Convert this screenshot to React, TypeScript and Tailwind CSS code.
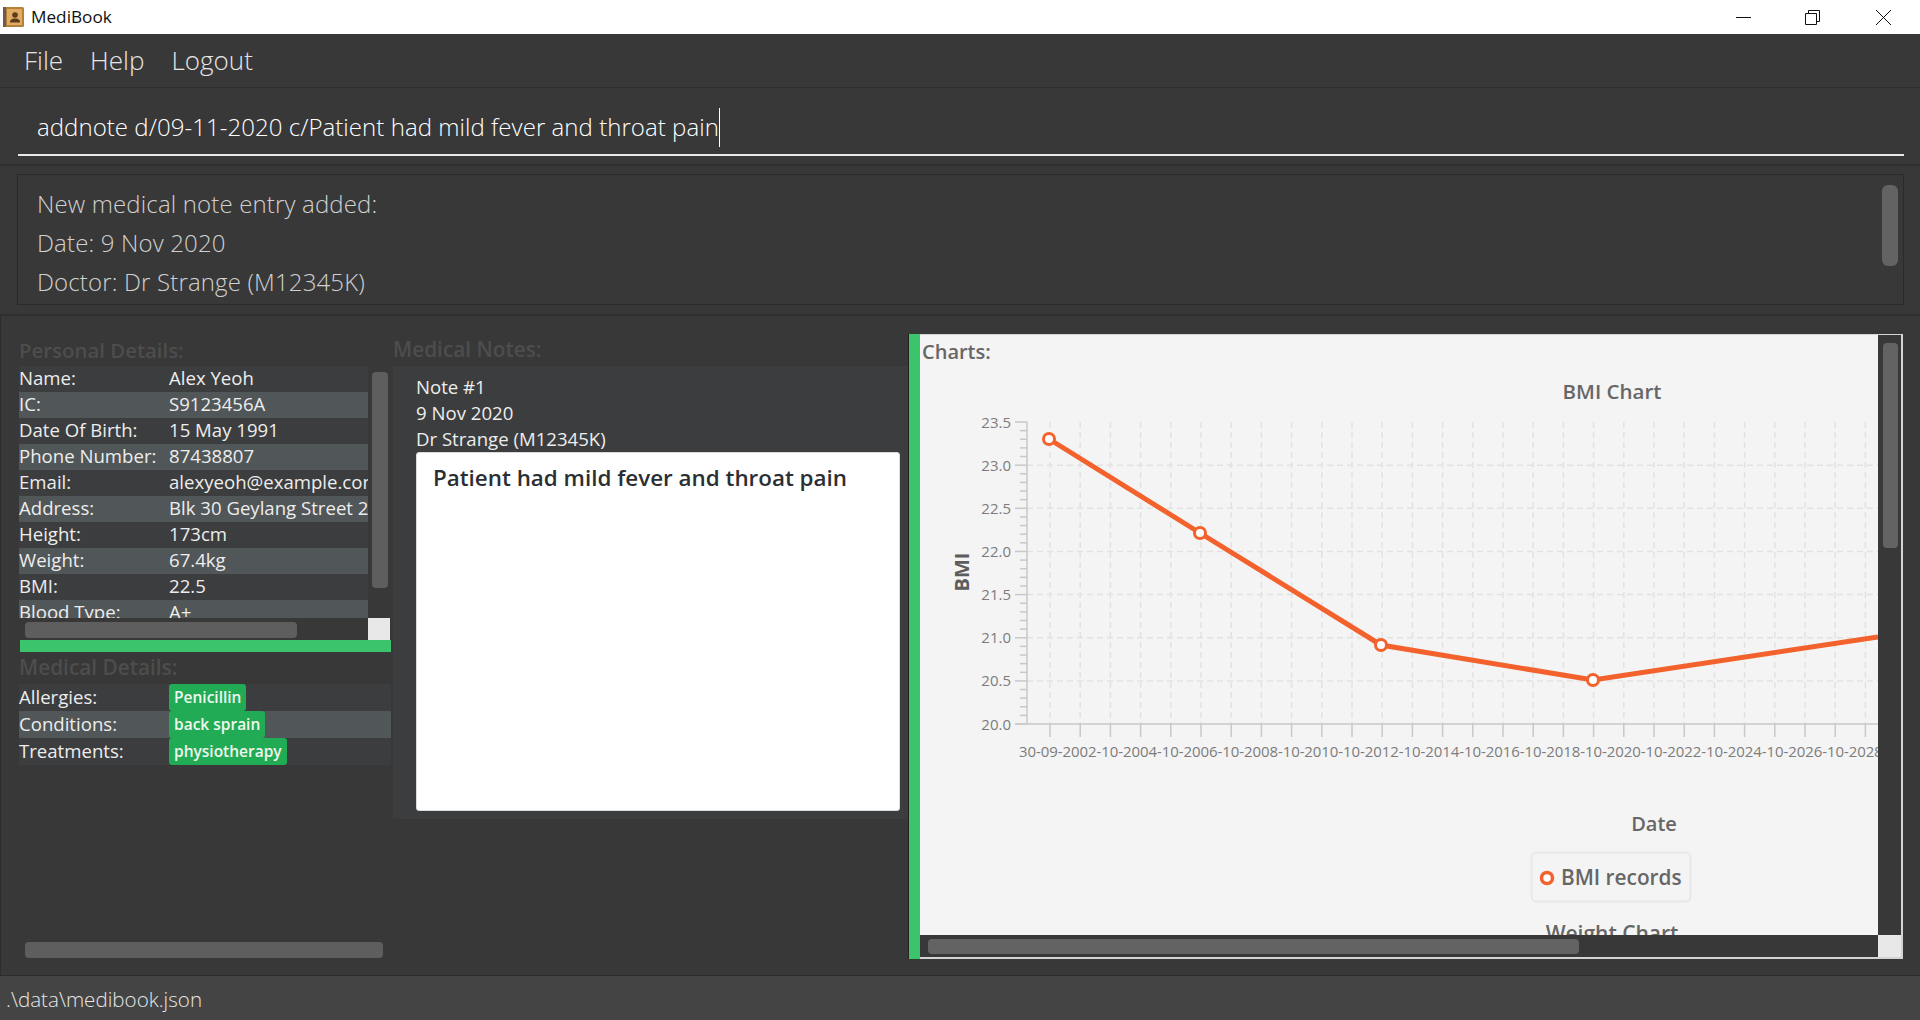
import React from 'react';

const personal = [
  ['Name:', 'Alex Yeoh'],
  ['IC:', 'S9123456A'],
  ['Date Of Birth:', '15 May 1991'],
  ['Phone Number:', '87438807'],
  ['Email:', 'alexyeoh@example.com'],
  ['Address:', 'Blk 30 Geylang Street 29'],
  ['Height:', '173cm'],
  ['Weight:', '67.4kg'],
  ['BMI:', '22.5'],
  ['Blood Type:', 'A+'],
];

const medical = [
  ['Allergies:', 'Penicillin'],
  ['Conditions:', 'back sprain'],
  ['Treatments:', 'physiotherapy'],
];

const yLabels = ['23.5', '23.0', '22.5', '22.0', '21.5', '21.0', '20.5', '20.0'];
const xTicks = Array.from({ length: 28 }, (_, i) => 130 + i * 30.2);
const points = [
  [129, 105],
  [280, 199],
  [461, 311],
  [673, 346],
];

function BmiChart() {
  const top = 88;
  const step = 43.15;
  const minor: number[] = [];
  for (let i = 0; i <= 35; i++) minor.push(top + (i * step) / 5);
  return (
    <svg width="958" height="601" className="block absolute top-[-1px] left-0">
      {yLabels.slice(1, 7).map((_, i) => (
        <line key={i} x1="107" x2="958" y1={top + (i + 1) * step} y2={top + (i + 1) * step} stroke="#e2e2e2" strokeWidth="1.5" strokeDasharray="6 4" />
      ))}
      {xTicks.map((x) => (
        <line key={x} x1={x} x2={x} y1={top} y2={top + 302} stroke="#e2e2e2" strokeWidth="1.5" strokeDasharray="6 4" />
      ))}
      {minor.map((y, i) => (
        <line key={i} x1={i % 5 === 0 ? 95 : 100} x2="107" y1={y} y2={y} stroke="#c8c8c8" strokeWidth="1.5" />
      ))}
      <line x1="107" x2="107" y1={top} y2={top + 302} stroke="#c8c8c8" strokeWidth="1.5" />
      <line x1="95" x2="958" y1={top + 302} y2={top + 302} stroke="#c8c8c8" strokeWidth="1.5" />
      {xTicks.map((x) => (
        <line key={x} x1={x} x2={x} y1={top + 302} y2={top + 315} stroke="#c8c8c8" strokeWidth="1.5" />
      ))}
      {yLabels.map((l, i) => (
        <text key={l} x="91" y={top + i * step + 5.5} textAnchor="end" fontSize="15" fill="#7c7c7c">{l}</text>
      ))}
      <text x="99" y="423" fontSize="15" letterSpacing="-0.08" fill="#7c7c7c">30-09-2002-10-2004-10-2006-10-2008-10-2010-10-2012-10-2014-10-2016-10-2018-10-2020-10-2022-10-2024-10-2026-10-2028</text>
      <text x="692" y="65" textAnchor="middle" fontSize="20.500" fontWeight="600" fill="#666">BMI Chart</text>
      <text transform="translate(49 238) rotate(-90)" textAnchor="middle" fontSize="20" fontWeight="700" fill="#5c5c5c">BMI</text>
      <text x="734" y="497" textAnchor="middle" fontSize="20" fontWeight="600" fill="#666">Date</text>
      <rect x="611.5" y="518.5" width="159" height="49" rx="5" fill="#f4f4f4" stroke="#e8e8e8" strokeWidth="2" />
      <circle cx="627" cy="544" r="5.500" fill="#fff" stroke="#f3622d" strokeWidth="3.500" />
      <text x="641" y="551" fontSize="20.800" fontWeight="600" fill="#666">BMI records</text>
      <text x="692" y="607" textAnchor="middle" fontSize="21" fontWeight="600" fill="#666">Weight Chart</text>
      <polyline points={[...points, [958, 303]].map((p) => p.join(',')).join(' ')} fill="none" stroke="#f3622d" strokeWidth="5" />
      {points.map((p) => (
        <circle key={p[0]} cx={p[0]} cy={p[1]} r="5.500" fill="#fff" stroke="#f3622d" strokeWidth="3" />
      ))}
    </svg>
  );
}

export default function App() {
  return (
    <div className="w-[1920px] h-[1020px] flex flex-col overflow-hidden bg-[#383838] font-['Open_Sans',sans-serif]">
      {/* window title bar */}
      <div className="h-[34px] bg-white flex items-center shrink-0">
        <svg width="21" height="20" viewBox="0 0 21 20" className="ml-[3px]">
          <rect x="0" y="0" width="21" height="20" rx="1.5" fill="#b5813a" />
          <rect x="0" y="0" width="3" height="20" fill="#6b5a55" />
          <rect x="4" y="2" width="15" height="16" fill="#e0ac62" />
          <circle cx="12" cy="8" r="2.800" fill="#5a3c1c" />
          <path d="M7 15.500c0-3 2-4 5-4s5 1 5 4z" fill="#5a3c1c" />
        </svg>
        <span className="ml-[7px] text-[17.2px] text-[#111]">MediBook</span>
        <div className="ml-auto flex items-center">
          <svg width="15" height="15" viewBox="0 0 15 15" className="mr-[54px]"><path d="M0 7.500H15" stroke="#111" strokeWidth="1" /></svg>
          <svg width="15" height="15" viewBox="0 0 15 15" className="mr-[56px]" fill="none" stroke="#111"><path d="M.5 3.500h11v11H.5z" /><path d="M3.500 3.500V.5h11v11h-3" /></svg>
          <svg width="15" height="15" viewBox="0 0 15 15" className="mr-[29px]" stroke="#111"><path d="M0 0L15 15M15 0L0 15" /></svg>
        </div>
      </div>

      {/* menu bar */}
      <div className="h-[54px] shrink-0 flex items-center pl-[24px] gap-[27px] text-[26px] font-light text-[#e6e6e6] border-b border-[#2e2e2e]">
        <span>File</span>
        <span>Help</span>
        <span>Logout</span>
      </div>

      {/* command box */}
      <div className="h-[78px] shrink-0 pl-[18px] pr-[16px] border-b-2 border-[#2f2f2f]">
        <div className="h-[68px] pt-[12px] border-b-2 border-[#e8e8e8] pl-[19px] flex items-center text-[24px] font-light text-white">
          <span className="tracking-[0.05px]">addnote d/09-11-2020 c/Patient had mild fever and throat pain</span>
          <span className="w-px h-[39px] bg-white" />
        </div>
      </div>

      {/* result box */}
      <div className="h-[150px] shrink-0 pt-[8px] pl-[17px] pr-[16px] pb-[8px] border-b-2 border-[#2f2f2f]">
        <div className="h-[131px] border border-[#2a2a2a] pl-[19px] pr-[5px] flex justify-between">
          <div className="pt-[9px] text-[24px] leading-[39px] font-light text-[#d0d0d0] tracking-[0.15px]">
            <div>New medical note entry added:</div>
            <div>Date: 9 Nov 2020</div>
            <div>Doctor: Dr Strange (M12345K)</div>
          </div>
          <div className="mt-[10px] w-[16px] h-[81px] rounded-[6px] bg-[#636363]" />
        </div>
      </div>

      {/* main panels */}
      <div className="flex-1 min-h-0 flex pt-[18px] border-b border-l border-[#2c2c2c]">
        <div className="w-[392px] shrink-0 pl-[18px] pr-[2px] flex flex-col">
          <h2 className="h-[32px] flex items-center text-[20.4px] font-semibold text-[#4d4d4d]">Personal Details:</h2>
          <div className="flex h-[252px]">
            <div className="w-[349px] h-[252px] overflow-hidden text-[18.6px] text-[#ededed]">
              {personal.map(([k, v], i) => (
                <div key={k} className={`h-[26px] leading-[24px] flex whitespace-nowrap ${i % 2 ? 'bg-[#515658]' : 'bg-[#3c3d3f]'}`}>
                  <span className="w-[150px] shrink-0">{k}</span>
                  <span>{v}</span>
                </div>
              ))}
            </div>
            <div className="w-[22px] pl-[4px] pt-[6px]">
              <div className="w-[16px] h-[216px] rounded-[4px] bg-[#5e5e5e]" />
            </div>
          </div>
          <div className="flex h-[22px]">
            <div className="w-[349px] pl-[6px] pt-[4px]">
              <div className="w-[272px] h-[16px] rounded-[4px] bg-[#5e5e5e]" />
            </div>
            <div className="w-[22px] bg-[#e8e8e8]" />
          </div>
          <div className="h-[12px] ml-px bg-[#3bc46b]" />
          <h2 className="h-[32px] flex items-center text-[20.8px] font-semibold text-[#4d4d4d]">Medical Details:</h2>
          <div className="text-[18.6px] text-[#ededed]">
            {medical.map(([k, v], i) => (
              <div key={k} className={`h-[27px] flex items-center ${i % 2 ? 'bg-[#515658]' : 'bg-[#3c3d3f]'}`}>
                <span className="w-[150px] shrink-0 pb-[2px]">{k}</span>
                <span className="h-[27px] px-[5px] flex items-center rounded-[3px] bg-[#21ab55] text-[15.5px] font-semibold text-[#f0f7ee]">{v}</span>
              </div>
            ))}
          </div>
          <div className="mt-auto mb-[17px] ml-[6px] w-[358px] h-[16px] rounded-[4px] bg-[#5e5e5e]" />
        </div>

        <div className="w-[515px] shrink-0 flex flex-col">
          <h2 className="h-[32px] flex items-center text-[20.8px] font-semibold text-[#4d4d4d]">Medical Notes:</h2>
          <div className="h-[453px] bg-[#3c3d3f] pl-[23px] pr-[8px] pt-[8px] text-[18.6px] text-[#ededed]">
            <div className="h-[26px] leading-[26px]">Note #1</div>
            <div className="h-[26px] leading-[26px]">9 Nov 2020</div>
            <div className="h-[26px] leading-[26px]">Dr Strange (M12345K)</div>
            <div className="h-[359px] bg-white rounded-[3px] border border-[#dcdcdc] pl-[16px] pt-[8px] text-[22.4px] font-semibold text-[#2b2f33]">
              Patient had mild fever and throat pain
            </div>
          </div>
        </div>

        {/* charts */}
        <div className="w-[995px] h-[625px] shrink-0 flex border-l border-[#222]">
          <div className="w-[11px] bg-[#3bc46b]" />
          <div className="flex-1 flex flex-col border-t border-r-2 border-b-2 border-[#d4d4d4]">
            <div className="flex-1 min-h-0 flex">
              <div className="w-[958px] relative overflow-hidden bg-[#f4f4f4]">
                <span className="absolute left-[2px] top-[2px] text-[20px] font-semibold text-[#666]">Charts:</span>
                <BmiChart />
              </div>
              <div className="w-[23px] bg-[#383838] pl-[5px] pt-[8px]">
                <div className="w-[15px] h-[205px] rounded-[4px] bg-[#636363]" />
              </div>
            </div>
            <div className="h-[22px] flex shrink-0">
              <div className="w-[958px] bg-[#383838] pl-[8px] pt-[4px]">
                <div className="w-[651px] h-[15px] rounded-[4px] bg-[#636363]" />
              </div>
              <div className="w-[23px] bg-[#e8e8e8]" />
            </div>
          </div>
        </div>
      </div>

      {/* status bar */}
      <div className="h-[44px] shrink-0 bg-[#444444] pl-[6px] pt-[2px] flex items-center text-[20.6px] font-light text-[#e6e6e6]">
        .\data\medibook.json
      </div>
    </div>
  );
}
